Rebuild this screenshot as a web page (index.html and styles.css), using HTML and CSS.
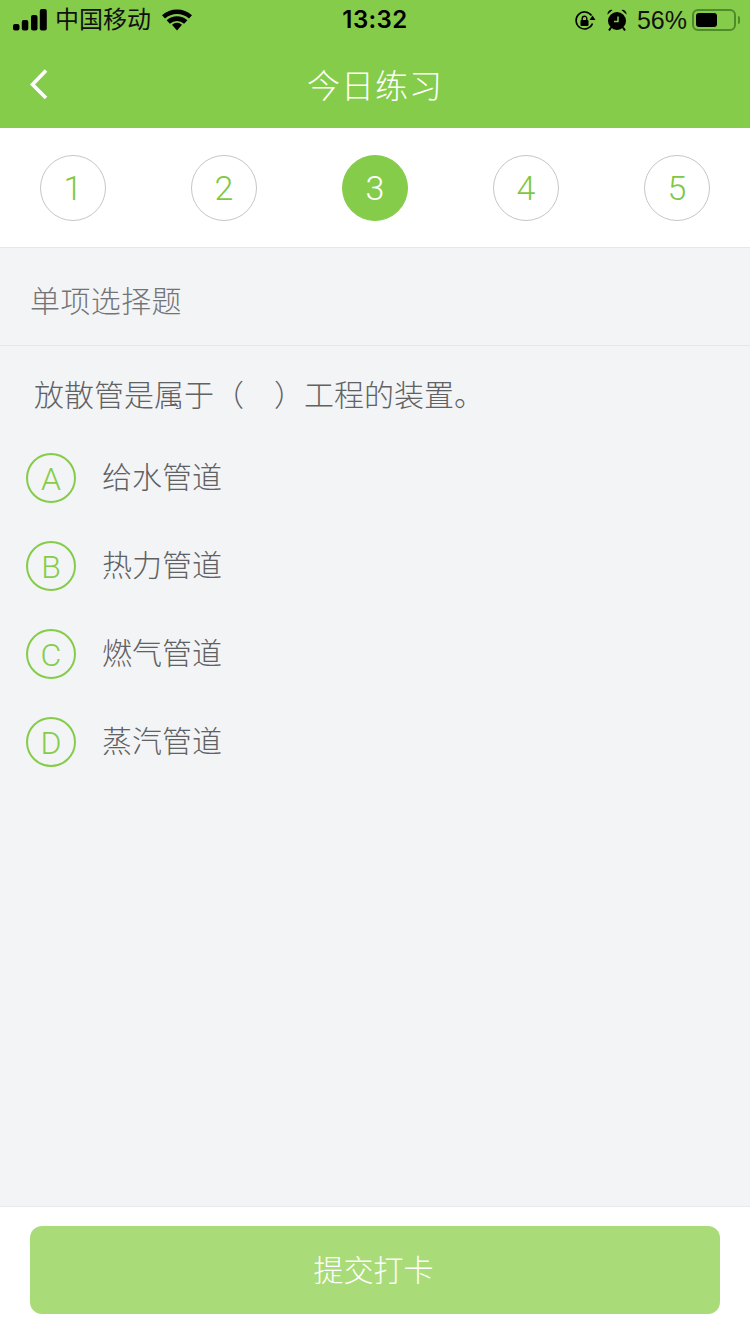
FILE: index.html
```html
<!DOCTYPE html>
<html lang="zh">
<head>
<meta charset="utf-8">
<title>今日练习</title>
<link rel="stylesheet" href="styles.css">
</head>
<body>
<div class="page">
  <header class="header">
    <div class="status">
      <div class="status-left">
        <svg class="signal" width="34" height="22" viewBox="0 0 34 22"><rect x="0" y="15" width="6.500" height="6.500" rx="2"/><rect x="8.800" y="11" width="6.500" height="10.500" rx="2"/><rect x="18" y="6" width="6.500" height="15.500" rx="2"/><rect x="26.800" y="0" width="7" height="21.500" rx="2"/></svg>
        <span class="carrier">中国移动</span>
        <svg class="wifi" width="30" height="22" viewBox="0 0 30 22"><path d="M15 21.500l-5-5.700a7.400 7.400 0 0 1 10 0z"/><path d="M0 6.200a22.500 22.500 0 0 1 30 0l-3 3.300a18 18 0 0 0-24 0z"/><path d="M4.600 11.200a15.800 15.800 0 0 1 20.800 0l-3.300 3.500a11 11 0 0 0-14.200 0z"/></svg>
      </div>
      <div class="time">13:32</div>
      <div class="status-right">
        <svg class="lock" width="22" height="22" viewBox="0 0 22 22"><path d="M18.500 13.500A8.500 8.500 0 1 1 17.500 5.500" fill="none" stroke="#000" stroke-width="1.600"/><path d="M21.500 10h-6l3-4.500z"/><rect x="6.500" y="10" width="8" height="6" rx="1"/><path d="M8.200 10V8.500a2.300 2.300 0 0 1 4.600 0V10" fill="none" stroke="#000" stroke-width="1.400"/></svg>
        <svg class="alarm" width="22" height="24" viewBox="0 0 22 24"><circle cx="11" cy="13" r="9"/><path d="M1.500 6.500a4 4 0 0 1 5-4.500zM20.500 6.500a4 4 0 0 0-5-4.500z"/><path d="M5 19.500l-2 3M17 19.500l2 3" stroke="#000" stroke-width="2"/><path d="M12 8.500v5H8" fill="none" stroke="#86cc4b" stroke-width="1.500"/></svg>
        <span class="percent">56%</span>
        <div class="battery"><div class="battery-fill"></div></div>
        <div class="battery-cap"></div>
      </div>
    </div>
    <div class="nav">
      <svg class="back" width="20" height="32" viewBox="0 0 20 32"><path d="M17 2.500L3.500 16.500 17 30" fill="none" stroke="#fff" stroke-width="3.600"/></svg>
      <h1 class="title">今日练习</h1>
    </div>
  </header>

  <nav class="steps">
    <div class="step">1</div>
    <div class="step">2</div>
    <div class="step step-active">3</div>
    <div class="step">4</div>
    <div class="step">5</div>
  </nav>

  <main class="main">
    <div class="qtype">单项选择题</div>
    <p class="question">放散管是属于（　）工程的装置。</p>
    <ul class="options">
      <li class="option"><span class="letter">A</span><span class="option-text">给水管道</span></li>
      <li class="option"><span class="letter">B</span><span class="option-text">热力管道</span></li>
      <li class="option"><span class="letter">C</span><span class="option-text">燃气管道</span></li>
      <li class="option"><span class="letter">D</span><span class="option-text">蒸汽管道</span></li>
    </ul>
  </main>

  <footer class="footer">
    <button class="submit" type="button">提交打卡</button>
  </footer>
</div>
</body>
</html>
```
FILE: styles.css
```css
* { box-sizing: border-box; }
html, body { margin: 0; padding: 0; }
body {
  width: 750px;
  height: 1334px;
  overflow: hidden;
  font-family: "Liberation Sans", "Noto Sans CJK SC", sans-serif;
  background: #f3f4f6;
}
.page { display: flex; flex-direction: column; height: 1334px; }

.header { height: 128px; background: #86cc4b; flex: none; }
.status {
  height: 40px;
  display: grid;
  grid-template-columns: 1fr auto 1fr;
  align-items: center;
  color: #000;
}
.status svg { display: block; fill: #000; }
.status-left { display: flex; align-items: center; padding-left: 13px; }
.carrier { font-size: 24px; line-height: 40px; margin-left: 8px; color: #111; }
.wifi { margin-left: 11px; }
.time { font-family: Inter, "Liberation Sans", sans-serif; font-size: 24px; font-weight: 600; letter-spacing: 0.4px; line-height: 40px; }
.status-right { display: flex; align-items: center; justify-content: flex-end; padding-right: 10px; }
.lock { margin-right: 10px; margin-top: 2px; }
.alarm { margin-right: 9px; }
.percent { font-size: 25px; line-height: 40px; margin-right: 5px; color: #111; }
.battery {
  width: 44px;
  height: 22px;
  border: 2px solid #4f8a2b;
  border-radius: 6px;
  padding: 2px;
}
.battery-fill { width: 21px; height: 14px; background: #000; border-radius: 3px; }
.battery-cap { width: 2px; height: 8px; background: #4f8a2b; margin-left: 2px; border-radius: 0 2px 2px 0; }

.nav { height: 88px; display: flex; align-items: center; justify-content: center; position: relative; }
.back { position: absolute; left: 29px; top: 28px; }
.title { margin: 0; font-size: 33px; color: #fff; letter-spacing: 1px; line-height: 82px; font-family: "Noto Sans CJK SC", sans-serif; font-weight: 300; }

.steps {
  flex: none;
  height: 120px;
  background: #fff;
  border-bottom: 1px solid #e6e7e9;
  display: flex;
  justify-content: space-between;
  align-items: flex-start;
  padding: 27px 40px 0;
}
.step {
  width: 66px;
  height: 66px;
  border: 1px solid #c6c6c6;
  border-radius: 50%;
  display: flex;
  align-items: center;
  justify-content: center;
  color: #7fc844;
  font-family: Roboto, "Liberation Sans", sans-serif;
  font-weight: 300;
  font-size: 34px;
}
.step-active { background: #86cc4b; border-color: #86cc4b; color: #fff; }

.main { flex: 1; min-height: 0; font-family: "Noto Sans CJK SC", sans-serif; font-weight: 300; color: #606163; }
.qtype {
  height: 98px;
  border-bottom: 1px solid #e6e7e9;
  padding-left: 30px;
  font-size: 30px;
  letter-spacing: 0.4px;
  line-height: 103px;
  color: #737477;
}
.question { margin: 0; padding: 0 0 0 34px; font-size: 30px; line-height: 94px; height: 87px; white-space: nowrap; }
.options { list-style: none; margin: 0; padding: 0 0 0 26px; }
.option { height: 88px; display: flex; align-items: center; }
.letter {
  width: 50px;
  height: 50px;
  margin-top: 2px;
  padding-top: 2px;
  border: 2px solid #86cc4b;
  border-radius: 50%;
  display: flex;
  align-items: center;
  justify-content: center;
  color: #86cc4b;
  font-size: 32px;
  font-family: Roboto, "Liberation Sans", sans-serif;
  font-weight: 300;
}
.option-text { margin-left: 26px; margin-top: -2px; font-size: 30px; margin-bottom: 2px; }

.footer {
  flex: none;
  height: 128px;
  background: #fff;
  border-top: 1px solid #e8e9eb;
  padding: 19px 30px 0;
}
.submit {
  display: block;
  width: 690px;
  height: 88px;
  border: 0;
  border-radius: 12px;
  background: #a9dc79;
  color: #fff;
  font-size: 30px;
  font-family: "Noto Sans CJK SC", sans-serif;
  font-weight: 300;
  padding: 0 3px 4px 0;
}
```
